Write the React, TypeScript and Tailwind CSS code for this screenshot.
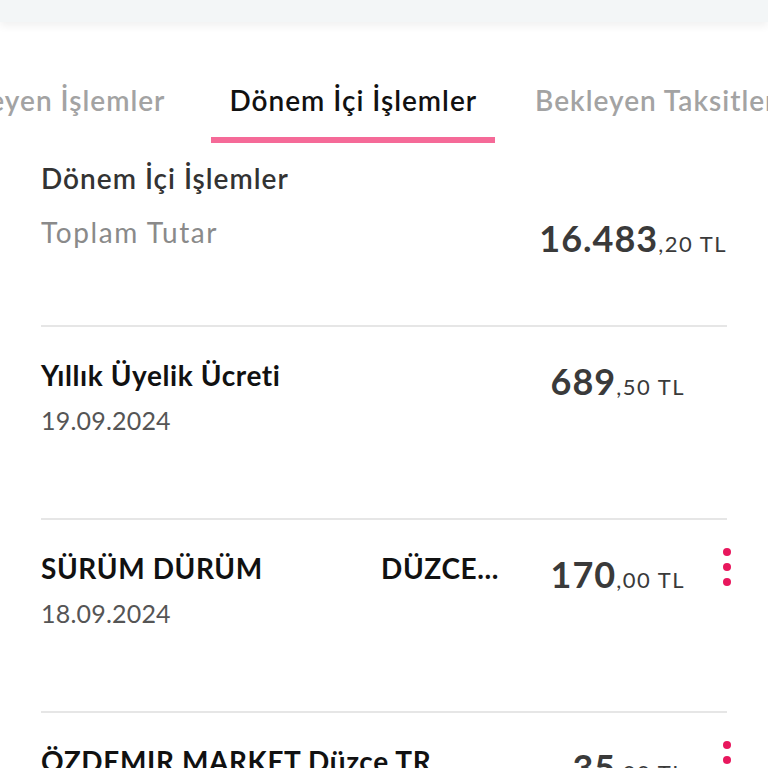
import React from 'react';

interface Txn {
  title: React.ReactNode;
  date: string;
  whole: string;
  cents: string;
  menu: boolean;
}

const txns: Txn[] = [
  { title: 'Yıllık Üyelik Ücreti', date: '19.09.2024', whole: '689', cents: ',50 TL', menu: false },
  {
    title: (
      <span className="flex w-[458px] justify-between">
        <span>SÜRÜM DÜRÜM</span>
        <span>DÜZCE...</span>
      </span>
    ),
    date: '18.09.2024',
    whole: '170',
    cents: ',00 TL',
    menu: true
  },
  { title: 'ÖZDEMIR MARKET Düzce TR', date: '18.09.2024', whole: '35', cents: ',00 TL', menu: true }
];

const Dots: React.FC = () => (
  <div className="-mr-[4px] -mt-[2px] flex flex-col items-center gap-[7px]">
    <span className="h-[8px] w-[8px] rounded-full bg-[#e8175d]" />
    <span className="h-[8px] w-[8px] rounded-full bg-[#e8175d]" />
    <span className="h-[8px] w-[8px] rounded-full bg-[#e8175d]" />
  </div>
);

const App: React.FC = () => {
  return (
    <div className="h-[768px] w-[768px] overflow-hidden bg-white font-['Lato',sans-serif]">
      {/* Top header strip */}
      <div className="h-[22px] bg-[#f3f6f7] shadow-[0_4px_8px_rgba(0,0,0,0.06)]" />

      {/* Tabs */}
      <div className="mt-[60px] flex whitespace-nowrap text-[28px] font-semibold leading-[36px] tracking-[1px]">
        <div className="-ml-[87px] px-[18px] pb-[25px] text-[#a3a3a3]">Bekleyen İşlemler</div>
        <div className="ml-[28px] border-b-[6px] border-[#f56a98] px-[18px] pb-[19px] text-[#111]">
          Dönem İçi İşlemler
        </div>
        <div className="ml-[22px] px-[18px] pb-[25px] text-[#a3a3a3]">Bekleyen Taksitler</div>
      </div>

      <div className="px-[41px]">
        {/* Summary */}
        <div className="h-[184px] border-b-2 border-[#e6e6e6] pt-[17px]">
          <div className="text-[28px] font-semibold leading-[36px] tracking-[1px] text-[#333]">
            Dönem İçi İşlemler
          </div>
          <div className="mt-[18px] flex items-start justify-between">
            <span className="text-[28px] leading-[36px] tracking-[1.6px] text-[#8a8a8a]">Toplam Tutar</span>
            <span className="mt-[4px] leading-[40px] text-[#3a3a3a]">
              <span className="text-[36px] font-bold tracking-[1px]">16.483</span>
              <span className="text-[22px] tracking-[1.5px]">,20 TL</span>
            </span>
          </div>
        </div>

        {txns.map((t, i) => (
          <div key={i} className="flex h-[193px] items-start border-b-2 border-[#e6e6e6] pt-[30px]">
            <div className="flex-1">
              <div className="text-[28px] font-bold leading-[36px] tracking-[0.6px] text-[#111]">{t.title}</div>
              <div className="mt-[10px] text-[25px] leading-[34px] tracking-[0.2px] text-[#555]">{t.date}</div>
            </div>
            <div className="mt-[4px] leading-[40px] text-[#3a3a3a]">
              <span className="text-[36px] font-bold tracking-[1px]">{t.whole}</span>
              <span className="text-[22px] tracking-[1.5px]">{t.cents}</span>
            </div>
            <div className="flex w-[42px] justify-end">{t.menu && <Dots />}</div>
          </div>
        ))}
      </div>
    </div>
  );
};

export default App;
